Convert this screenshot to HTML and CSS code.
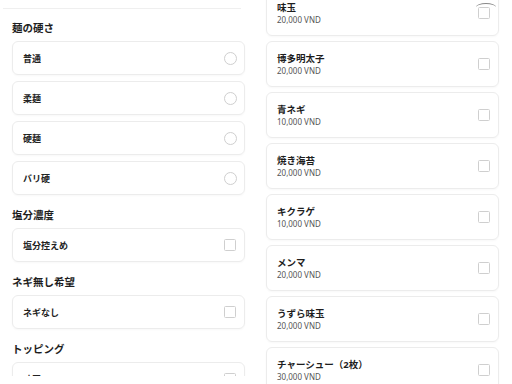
FILE: index.html
```html
<!DOCTYPE html>
<html lang="ja">
<head>
<meta charset="utf-8">
<link rel="stylesheet" href="styles.css">
</head>
<body>
<div class="screen">
  <div class="panel panel-left">
    <div class="divider"></div>
    <h2 class="group-title first">麺の硬さ</h2>
    <div class="option"><span class="opt-label">普通</span><span class="radio"></span></div>
    <div class="option"><span class="opt-label">柔麺</span><span class="radio"></span></div>
    <div class="option"><span class="opt-label">硬麺</span><span class="radio"></span></div>
    <div class="option"><span class="opt-label">バリ硬</span><span class="radio"></span></div>
    <h2 class="group-title">塩分濃度</h2>
    <div class="option"><span class="opt-label">塩分控えめ</span><span class="check"></span></div>
    <h2 class="group-title">ネギ無し希望</h2>
    <div class="option"><span class="opt-label">ネギなし</span><span class="check"></span></div>
    <h2 class="group-title">トッピング</h2>
    <div class="option"><span class="opt-label">味玉</span><span class="check"></span></div>
  </div>
  <div class="panel panel-right">
    <div class="topping first-topping">
      <div class="t-info"><div class="t-name">味玉</div><div class="t-price">20,000 VND</div></div>
      <span class="check"></span>
      <span class="scroll-mark"></span>
    </div>
    <div class="topping">
      <div class="t-info"><div class="t-name">博多明太子</div><div class="t-price">20,000 VND</div></div>
      <span class="check"></span>
    </div>
    <div class="topping">
      <div class="t-info"><div class="t-name">青ネギ</div><div class="t-price">10,000 VND</div></div>
      <span class="check"></span>
    </div>
    <div class="topping">
      <div class="t-info"><div class="t-name">焼き海苔</div><div class="t-price">20,000 VND</div></div>
      <span class="check"></span>
    </div>
    <div class="topping">
      <div class="t-info"><div class="t-name">キクラゲ</div><div class="t-price">10,000 VND</div></div>
      <span class="check"></span>
    </div>
    <div class="topping">
      <div class="t-info"><div class="t-name">メンマ</div><div class="t-price">20,000 VND</div></div>
      <span class="check"></span>
    </div>
    <div class="topping">
      <div class="t-info"><div class="t-name">うずら味玉</div><div class="t-price">20,000 VND</div></div>
      <span class="check"></span>
    </div>
    <div class="topping">
      <div class="t-info"><div class="t-name">チャーシュー（2枚）</div><div class="t-price">30,000 VND</div></div>
      <span class="check"></span>
    </div>
  </div>
</div>
</body>
</html>
```

FILE: styles.css
```css
* { box-sizing: border-box; }
html, body { margin: 0; padding: 0; background: #fff; }
body {
  font-family: "Noto Sans", "Noto Sans CJK JP", sans-serif;
  color: #222;
}
.screen {
  display: flex;
  width: 512px;
  height: 384px;
  overflow: hidden;
}
.panel {
  width: 254px;
  flex: 0 0 254px;
  padding: 0 9px 0 12px;
  overflow: hidden;
}
.panel-left { height: 376px; }
.panel-right { height: 384px; }

.divider {
  height: 9px;
  margin: 0 4px 0 -9px;
  border-bottom: 1px solid #efefef;
}
.group-title {
  margin: 12px 0 5px;
  font-size: 10.5px;
  line-height: 16px;
  font-weight: 700;
  color: #1e1e1e;
}
.group-title.first { margin-top: 11px; }

.option {
  height: 34px;
  margin-bottom: 6px;
  border: 1px solid #ececec;
  border-radius: 6px;
  box-shadow: 0 1px 2px rgba(0,0,0,0.03);
  display: flex;
  align-items: center;
  justify-content: space-between;
  padding: 0 7px 0 10px;
}
.option:last-child { margin-bottom: 0; }
.opt-label {
  font-size: 9px;
  font-weight: 600;
  color: #222;
}
.radio {
  width: 13px;
  height: 13px;
  border: 1px solid #cfcfcf;
  border-radius: 50%;
}
.check {
  width: 12px;
  height: 12px;
  border: 1px solid #cfcfcf;
  border-radius: 1.5px;
  margin-right: 1px;
}

.topping {
  position: relative;
  height: 46px;
  margin-bottom: 5px;
  border: 1px solid #ececec;
  border-radius: 6px;
  box-shadow: 0 1px 2px rgba(0,0,0,0.03);
  display: flex;
  align-items: center;
  justify-content: space-between;
  padding: 0 7px 0 10px;
}
.first-topping { margin-top: -10px; }
.t-info { display: flex; flex-direction: column; padding-top: 1px; }
.t-name {
  font-size: 9.5px;
  line-height: 13px;
  font-weight: 700;
  color: #1e1e1e;
}
.t-price {
  font-size: 8px;
  line-height: 12px;
  color: #555;
}
.scroll-mark {
  position: absolute;
  right: 2px;
  top: 12px;
  width: 20px;
  height: 4px;
  border-top: 1.5px solid #888;
  border-radius: 50% 50% 0 0 / 100% 100% 0 0;
}
```
